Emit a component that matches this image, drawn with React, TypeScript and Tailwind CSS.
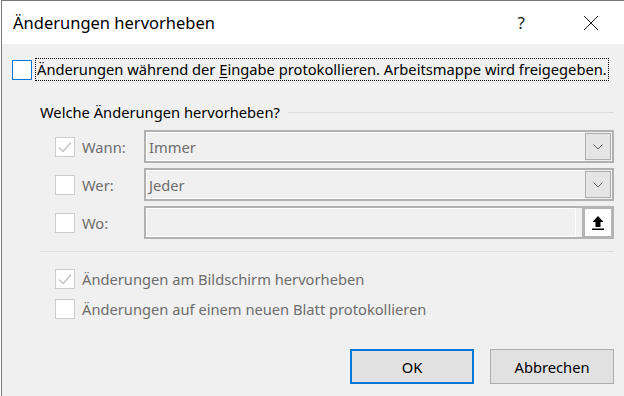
import React from 'react'

function Check({ checked, focused }: { checked?: boolean; focused?: boolean }) {
  return (
    <div
      className={`w-[20px] h-[20px] shrink-0 bg-white border flex items-center justify-center ${
        focused ? 'border-[#0078d7]' : 'border-[#cccccc]'
      }`}
    >
      {checked && (
        <svg width="16" height="16" viewBox="0 0 16 16">
          <path d="M2 8.5 L6 12.5 L14 3.5" fill="none" stroke="#c4c4c4" strokeWidth="1.4" />
        </svg>
      )}
    </div>
  )
}

function Chevron() {
  return (
    <svg width="10" height="6" viewBox="0 0 10 6">
      <path d="M0.5 0.5 L5 5 L9.5 0.5" fill="none" stroke="#606060" strokeWidth="1" />
    </svg>
  )
}

function Combo({ value }: { value: string }) {
  return (
    <div className="flex-1 h-[33px] border-2 border-[#b1b1b1] flex items-stretch">
      <div className="flex-1 border-y border-l border-white flex items-center pl-[2px] text-[#6d6d6d]">
        {value}
      </div>
      <div className="w-[26px] my-[1px] mr-[1px] border border-[#adadad] bg-[#e5e5e5] flex items-center justify-center">
        <Chevron />
      </div>
    </div>
  )
}

function RangeField() {
  return (
    <div className="flex-1 h-[33px] border-2 border-[#b1b1b1] flex items-stretch">
      <div className="flex-1 border border-white" />
      <div className="w-[32px] -my-[2px] -mr-[2px] ml-[6px] border-[3px] border-[#b4b4b4] bg-white flex items-center justify-center">
        <svg width="14" height="16" viewBox="0 0 14 16">
          <path d="M7 1 L12.5 7 H9.5 V12 H4.5 V7 H1.5 Z" fill="#000" />
          <rect x="1" y="13.5" width="12" height="1.5" fill="#000" />
        </svg>
      </div>
    </div>
  )
}

function OptionRow({ label, children, checked }: { label: string; children: React.ReactNode; checked?: boolean }) {
  return (
    <div className="flex items-center">
      <div className="ml-[43px]">
        <Check checked={checked} />
      </div>
      <span className="w-[62px] ml-[7px] text-[#6d6d6d]">{label}</span>
      {children}
    </div>
  )
}

export default function App() {
  return (
    <div className="w-[624px] h-[396px] bg-white pl-px overflow-hidden font-['Noto_Sans',sans-serif] text-[14.7px] leading-[20px] text-black">
      <div className="h-full border-l border-t border-[#7a7a7a] flex flex-col">
        {/* Title bar */}
        <div className="h-[43px] shrink-0 bg-white flex items-center pl-[11px]">
          <span className="text-[16.5px]">Änderungen hervorheben</span>
          <span className="ml-auto text-[17px] text-[#1a1a1a]">?</span>
          <div className="w-[46px] ml-[43px] mr-[10px] flex justify-center">
            <svg width="16" height="16" viewBox="0 0 16 16">
              <path d="M1 1 L15 15 M15 1 L1 15" stroke="#222" strokeWidth="1" />
            </svg>
          </div>
        </div>

        {/* Body */}
        <div className="flex-1 bg-[#f0f0f0] pl-[10px] pr-[10px] flex flex-col">
          <div className="mt-[14px] flex items-center">
            <Check focused />
            <span className="ml-[3px] px-[2px] h-[23px] leading-[23px] whitespace-nowrap outline outline-1 outline-dotted outline-black -outline-offset-1">
              Änderungen während der <span className="underline underline-offset-2">E</span>ingabe protokollieren. Arbeitsmappe wird freigegeben.
            </span>
          </div>

          <div className="mt-[21px] ml-[28px] flex items-center h-[20px]">
            <span>Welche Änderungen hervorheben?</span>
            <div className="flex-1 ml-[8px] h-px bg-[#dcdcdc]" />
          </div>

          <div className="mt-[8px] flex flex-col gap-[5px]">
            <OptionRow label="Wann:" checked>
              <Combo value="Immer" />
            </OptionRow>
            <OptionRow label="Wer:">
              <Combo value="Jeder" />
            </OptionRow>
            <OptionRow label="Wo:">
              <RangeField />
            </OptionRow>
          </div>

          <div className="mt-[12px] ml-[28px] h-px bg-[#dcdcdc]" />

          <div className="mt-[17px] ml-[43px] flex items-center">
            <Check checked />
            <span className="ml-[7px] text-[#6d6d6d]">Änderungen am Bildschirm hervorheben</span>
          </div>
          <div className="mt-[10px] ml-[43px] flex items-center">
            <Check />
            <span className="ml-[7px] text-[#6d6d6d]">Änderungen auf einem neuen Blatt protokollieren</span>
          </div>

          <div className="mt-[30px] flex justify-end gap-[16px]">
            <button className="w-[124px] h-[35px] border-2 border-[#0078d7] bg-[#e1e1e1]">OK</button>
            <button className="w-[124px] h-[35px] border border-[#adadad] bg-[#e1e1e1]">Abbrechen</button>
          </div>
        </div>
      </div>
    </div>
  )
}
